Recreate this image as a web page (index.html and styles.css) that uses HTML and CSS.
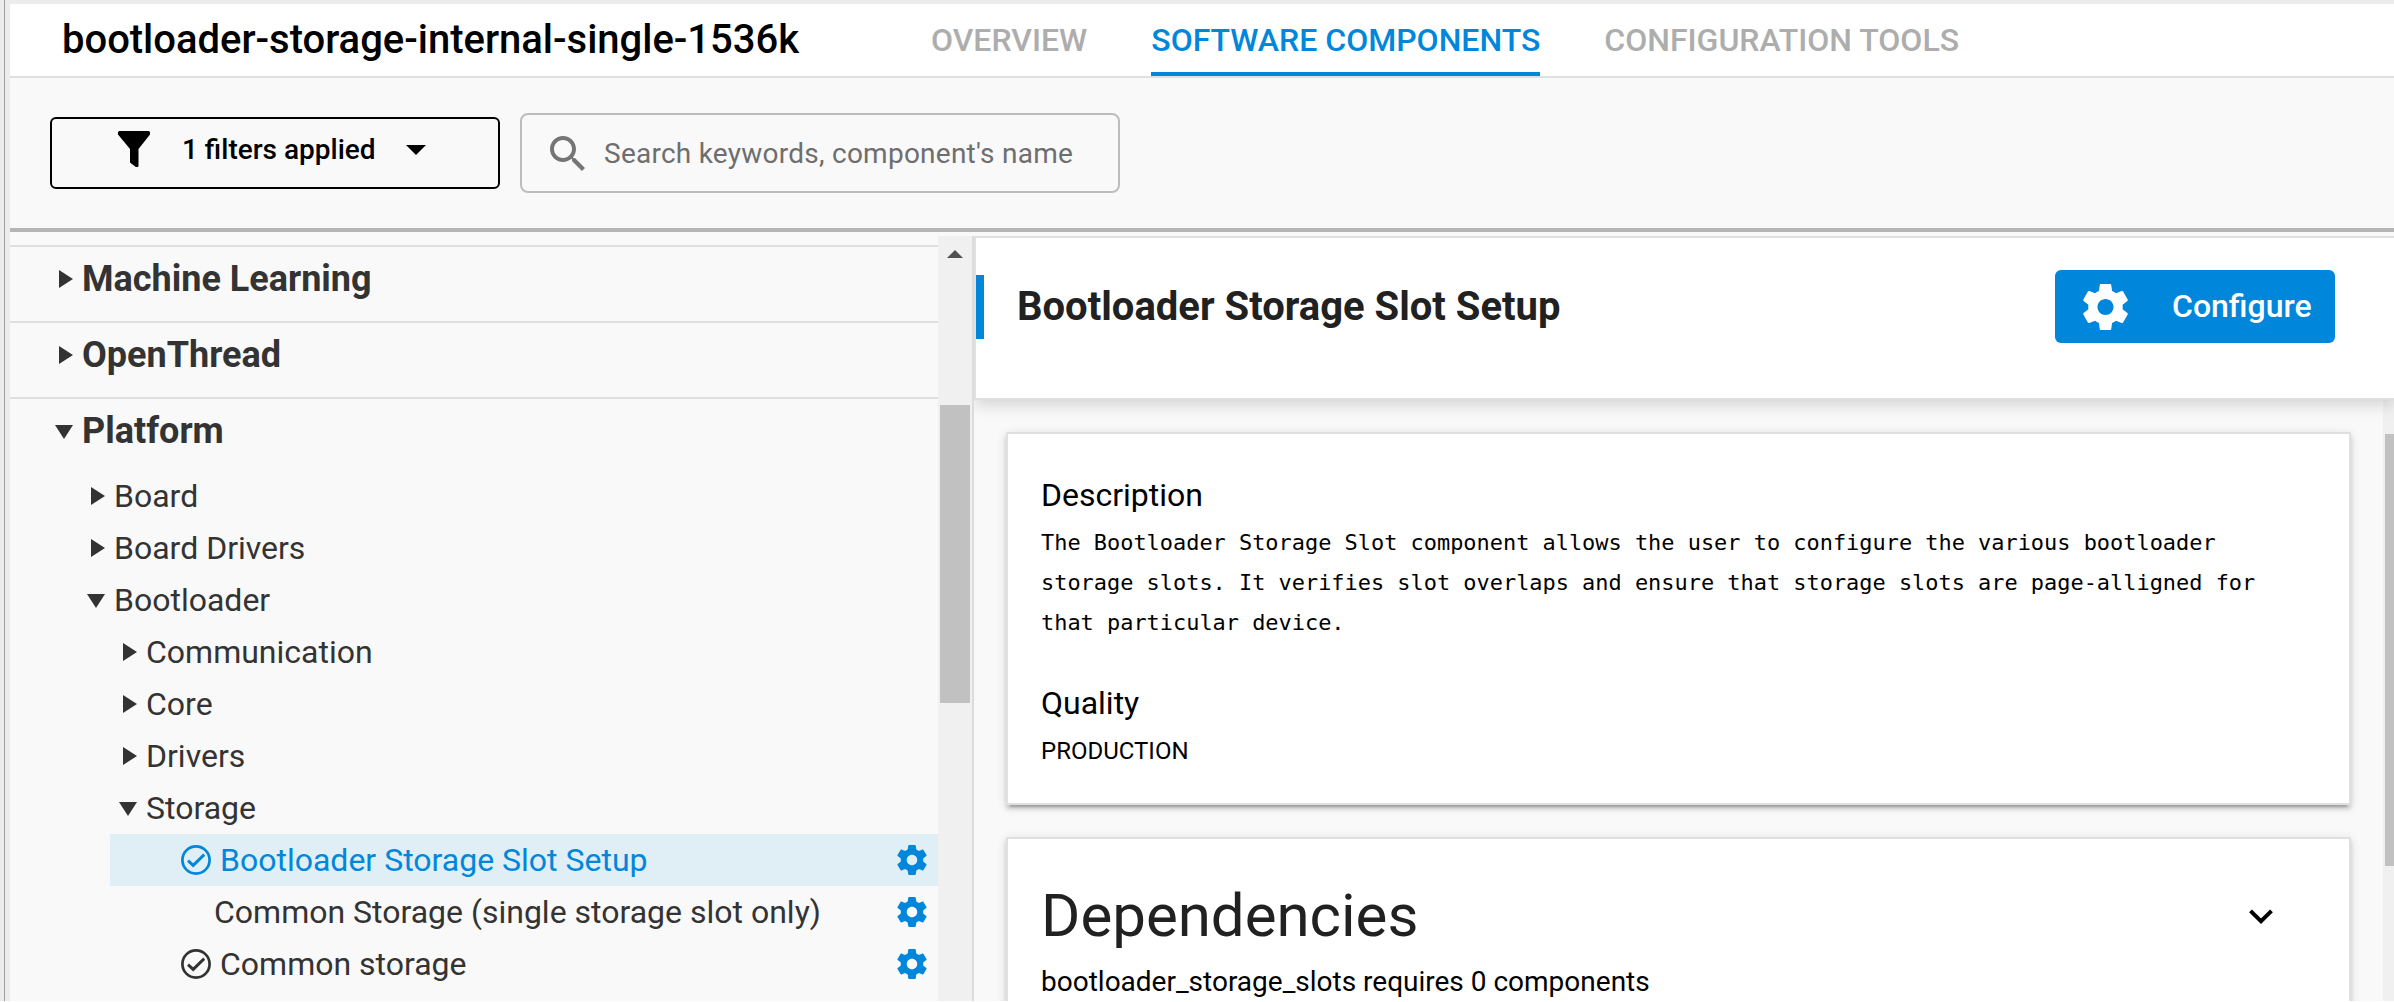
FILE: index.html
```html
<!DOCTYPE html>
<html lang="en">
<head>
<meta charset="utf-8">
<title>Software Components</title>
<link rel="stylesheet" href="styles.css">
</head>
<body>
<svg class="defs" aria-hidden="true">
  <symbol id="gear" viewBox="2.2 2 19.6 20"><path d="M19.43 12.98c.04-.32.07-.64.07-.98s-.03-.66-.07-.98l2.11-1.65c.19-.15.24-.42.12-.64l-2-3.46c-.12-.22-.39-.3-.61-.22l-2.49 1c-.52-.4-1.08-.73-1.69-.98l-.38-2.65C14.46 2.18 14.25 2 14 2h-4c-.25 0-.46.18-.49.42l-.38 2.65c-.61.25-1.17.59-1.69.98l-2.49-1c-.23-.09-.49 0-.61.22l-2 3.46c-.13.22-.07.49.12.64l2.11 1.65c-.04.32-.07.65-.07.98s.03.66.07.98l-2.11 1.65c-.19.15-.24.42-.12.64l2 3.46c.12.22.39.3.61.22l2.49-1c.52.4 1.08.73 1.69.98l.38 2.65c.03.24.24.42.49.42h4c.25 0 .46-.18.49-.42l.38-2.65c.61-.25 1.17-.59 1.69-.98l2.49 1c.23.09.49 0 .61-.22l2-3.46c.12-.22.07-.49-.12-.64l-2.11-1.65zM12 15.5c-1.93 0-3.5-1.57-3.5-3.5s1.57-3.5 3.5-3.5 3.5 1.57 3.5 3.5-1.57 3.5-3.5 3.5z"/></symbol>
  <symbol id="check" viewBox="0 0 30 30"><circle cx="15" cy="15" r="13.6" fill="none" stroke="currentColor" stroke-width="2.7"/><path d="M7 15.600l5.200 4.800L23.200 9.600" fill="none" stroke="currentColor" stroke-width="2.900"/></symbol>
</svg>
<div class="window">
  <div class="gutter"></div>
  <div class="app">
    <header class="header">
      <h1 class="project"><span>bootloader-storage-internal-single-1536k</span></h1>
      <nav class="tabs">
        <a class="tab">OVERVIEW</a>
        <a class="tab tab-active">SOFTWARE COMPONENTS</a>
        <a class="tab">CONFIGURATION TOOLS</a>
      </nav>
    </header>
    <div class="toolbar">
      <button class="filter">
        <svg class="funnel" viewBox="0 0 32 36"><path d="M1.500 0h29Q32 0 32 1.500v2L20.500 18v17q0 1-1.200 1h-1.500L12 31.500V18L0 3.500v-2Q0 0 1.500 0z"/></svg>
        <span class="filter-text">1 filters applied</span>
        <svg class="caret" viewBox="0 0 20 10"><path d="M0 0h20L10 10z"/></svg>
      </button>
      <div class="search">
        <svg class="magnifier" viewBox="3 3 17.500 17.500"><path d="M15.500 14h-.79l-.28-.27C15.410 12.590 16 11.110 16 9.500 16 5.910 13.090 3 9.500 3S3 5.910 3 9.500 5.910 16 9.500 16c1.610 0 3.090-.59 4.230-1.570l.27.28v.79l5 4.990L20.490 19l-4.990-5zm-6 0C7.010 14 5 11.990 5 9.500S7.010 5 9.500 5 14 7.010 14 9.500 11.990 14 9.500 14z"/></svg>
        <span class="placeholder">Search keywords, component's name</span>
      </div>
    </div>
    <main class="main">
      <aside class="tree">
        <div class="group"><i class="arrow"></i><span>Machine Learning</span></div>
        <div class="group"><i class="arrow"></i><span>OpenThread</span></div>
        <div class="group group-open"><i class="arrow arrow-open"></i><span>Platform</span></div>
        <div class="item level-1"><i class="arrow"></i><span>Board</span></div>
        <div class="item level-1"><i class="arrow"></i><span>Board Drivers</span></div>
        <div class="item level-1"><i class="arrow arrow-open"></i><span>Bootloader</span></div>
        <div class="item level-2"><i class="arrow"></i><span>Communication</span></div>
        <div class="item level-2"><i class="arrow"></i><span>Core</span></div>
        <div class="item level-2"><i class="arrow"></i><span>Drivers</span></div>
        <div class="item level-2"><i class="arrow arrow-open"></i><span>Storage</span></div>
        <div class="leaf leaf-selected"><svg class="check"><use href="#check"/></svg><span>Bootloader Storage Slot Setup</span><svg class="gear"><use href="#gear"/></svg></div>
        <div class="leaf leaf-plain"><span>Common Storage (single storage slot only)</span><svg class="gear"><use href="#gear"/></svg></div>
        <div class="leaf"><svg class="check"><use href="#check"/></svg><span>Common storage</span><svg class="gear"><use href="#gear"/></svg></div>
      </aside>
      <div class="scrollbar">
        <svg class="scroll-arrow" viewBox="0 0 16 8"><path d="M8 0l8 8H0z"/></svg>
        <div class="thumb"></div>
      </div>
      <section class="detail">
        <div class="detail-header">
          <h2 class="detail-title"><span>Bootloader Storage Slot Setup</span></h2>
          <button class="configure"><svg class="configure-gear"><use href="#gear"/></svg><span>Configure</span></button>
        </div>
        <div class="detail-body">
          <div class="cards">
            <article class="card">
              <h3 class="label">Description</h3>
              <p class="description">The Bootloader Storage Slot component allows the user to configure the various bootloader storage slots. It verifies slot overlaps and ensure that storage slots are page-alligned for that particular device.</p>
              <h3 class="label">Quality</h3>
              <p class="quality">PRODUCTION</p>
            </article>
            <article class="card card-deps">
              <div class="deps-head">
                <h2 class="deps-title">Dependencies</h2>
                <svg class="chevron" viewBox="0 0 24 15"><path d="M1.500 1.800L12 12.200 22.500 1.800" fill="none" stroke="#000" stroke-width="3.900"/></svg>
              </div>
              <p class="deps-text"><span>bootloader_storage_slots requires 0 components</span></p>
            </article>
          </div>
          <div class="detail-scroll"><div class="detail-thumb"></div></div>
        </div>
      </section>
    </main>
  </div>
</div>
</body>
</html>
```
FILE: styles.css
```css
* { box-sizing: border-box; }
body { margin: 0; height: 1002px; overflow: hidden; background: #fff; font-family: Roboto, "Liberation Sans", sans-serif; color: #000; }
h1, h2, h3, p { margin: 0; font-weight: 400; }
button { font: inherit; padding: 0; margin: 0; }
svg { display: block; flex: none; fill: currentColor; }
.defs { display: none; }

.window { display: flex; height: 1001px; overflow: hidden; padding-top: 4px; background: #ececec; }
.gutter { width: 5px; margin: -4px 5px 0 0; border-right: 1px solid #a0a0a0; flex: none; }
.app { flex: 1; min-width: 0; display: flex; flex-direction: column; background: #f9f9f9; }

.header { display: flex; height: 74px; flex: none; background: #fff; border-bottom: 2px solid #e0e0e0; }
.project { width: 921px; padding-left: 52px; font-size: 40px; font-weight: 500; letter-spacing: -.02px; line-height: 72px; white-space: nowrap; }
.tabs { display: flex; gap: 64px; }
.tab { height: 72px; font-size: 32px; font-weight: 500; line-height: 72px; color: #adadad; border-bottom: 4px solid transparent; white-space: nowrap; }
.tab-active { color: #0087dc; border-color: #0087dc; }

.toolbar { display: flex; gap: 20px; height: 154px; flex: none; padding: 35px 0 0 40px; border-bottom: 4px solid #b5b5b5; }
.filter { display: flex; width: 450px; height: 72px; margin-top: 4px; padding-left: 66px; background: none; border: 2px solid #000; border-radius: 6px; color: #000; }
.funnel { width: 32px; height: 36px; margin-top: 12px; }
.filter-text { width: 193px; margin: 11px 31px 0 32px; font-size: 28px; font-weight: 500; line-height: 40px; text-align: left; white-space: nowrap; }
.caret { width: 20px; height: 10px; margin-top: 26px; }
.search { display: flex; align-items: center; width: 600px; height: 80px; padding-left: 28px; border: 2px solid #bdbdbd; border-radius: 8px; color: #757575; }
.magnifier { width: 35px; height: 35px; }
.placeholder { margin: 2px 0 0 19px; font-size: 28px; letter-spacing: .25px; line-height: 40px; white-space: nowrap; color: #6e6e6e; }

.main { flex: 1; min-height: 0; display: flex; }
.tree { width: 928px; flex: none; padding-top: 13px; color: #333; }
.group { display: flex; align-items: center; height: 76px; padding: 0 0 10px 44px; border-top: 2px solid #e0e0e0; font-size: 36px; font-weight: 700; }
.group-open { height: 73px; padding-bottom: 7px; }
.arrow { flex: none; width: 19px; height: 18px; margin-right: 9px; padding: 0; background: #333; clip-path: polygon(5px 0, 19px 9px, 5px 18px); }
.arrow-open { clip-path: polygon(1px 3px, 19px 3px, 10px 17px); }
.item, .leaf { display: flex; align-items: center; height: 52px; font-size: 32px; line-height: 52px; white-space: nowrap; }
.level-1 { padding-left: 76px; }
.level-2 { padding-left: 108px; }
.leaf { margin-left: 100px; padding: 0 11px 0 71px; }
.leaf-plain { padding-left: 104px; }
.leaf-selected { background: #e0eef6; color: #0087dc; }
.check { width: 30px; height: 30px; margin-right: 9px; }
.gear { width: 30px; height: 30px; margin-left: auto; color: #0087dc; }

.scrollbar { display: flex; flex-direction: column; align-items: center; width: 36px; flex: none; margin-top: 4px; padding-top: 14px; background: #f0f0f0; border-right: 2px solid #dcdcdc; }
.scroll-arrow { width: 16px; height: 8px; color: #505050; }
.thumb { width: 30px; height: 298px; margin-top: 147px; background: #c1c1c1; }

.detail { flex: 1; min-width: 0; display: flex; flex-direction: column; margin-top: 4px; }
.detail-header { position: relative; z-index: 1; display: flex; justify-content: space-between; height: 164px; flex: none; border: 2px solid #e0e0e0; border-right: 0; background: #fff; box-shadow: 0 4px 16px rgba(0,0,0,.17); clip-path: inset(0 0 -30px 0); }
.detail-title { height: 64px; margin-top: 37px; padding-left: 33px; border-left: 8px solid #0087dc; font-size: 40px; font-weight: 700; line-height: 64px; color: #212121; }
.configure { display: flex; align-items: center; width: 280px; height: 73px; margin: 32px 59px 0 0; padding-left: 28px; border: 0; border-radius: 6px; background: #0087dc; color: #fff; font-size: 32px; line-height: 40px; font-weight: 500; }
.configure span { margin-bottom: 2px; }
.configure-gear { width: 45px; height: 46px; margin-right: 44px; }
.detail-body { flex: 1; min-height: 0; display: flex; }
.cards { flex: 1; padding: 32px 32px 0; }
.card { height: 373px; margin-bottom: 32px; padding: 41px 34px 0 33px; background: #fff; border: 2px solid #e0e0e0; box-shadow: 0 6px 2px -4px rgba(0,0,0,.2), 0 4px 4px rgba(0,0,0,.14), 0 2px 10px rgba(0,0,0,.12); }
.label { font-size: 32px; line-height: 40px; }
.description { margin: 8px 0 40px; font: 21.930px/40px "DejaVu Sans Mono", monospace; }
.quality { margin-top: 8px; font-size: 24px; line-height: 40px; }
.deps-head { display: flex; justify-content: space-between; }
.deps-title { font-size: 60px; line-height: 72px; color: #212121; }
.chevron { width: 24px; height: 15px; margin: 29px 42px 0 0; }
.deps-text { margin-top: 10px; font-size: 28px; line-height: 40px; }
.detail-scroll { width: 11px; padding: 34px 0 0 2px; background: #f0f0f0; }
.detail-thumb { height: 432px; background: #c1c1c1; }
```
